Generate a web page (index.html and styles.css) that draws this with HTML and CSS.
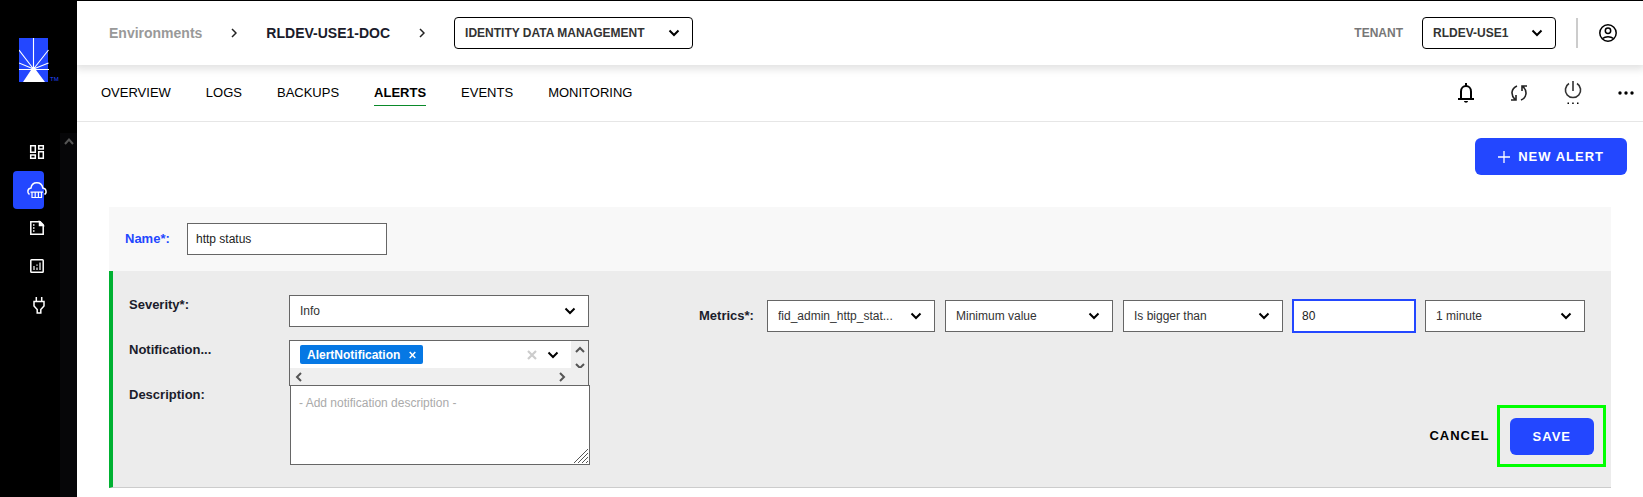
FILE: index.html
```html
<!DOCTYPE html>
<html lang="en">
<head>
<meta charset="utf-8">
<title>Alerts</title>
<link rel="stylesheet" href="styles.css">
</head>
<body>
<svg class="defs" aria-hidden="true"><symbol id="chev" viewBox="0 0 12 8"><path d="M1.5 1.5 6 6l4.500-4.500" fill="none" stroke="currentColor" stroke-width="2"/></symbol></svg>
<div class="app">
  <aside class="sidebar">
    <a class="logo" href="#" aria-label="Home">
      <svg width="30" height="44" viewBox="0 0 30 44"><path fill="#2347ff" d="M0 0h29v44H0z"/><path d="M14.500 31V0M14.500 31 0 12M14.500 31 29.500 12M14.500 31 0 25M14.500 31l15-6M0 31.500h30" stroke="#fff" stroke-width="1.100" fill="none"/><path fill="#fff" d="m13 29h3l1 3 9 12H4l8-12z"/></svg>
      <span class="tm">TM</span>
    </a>
    <div class="side-body">
      <nav class="side-nav" aria-label="Main">
        <a href="#" aria-label="Dashboard"><svg width="14" height="14" viewBox="0 0 14 14"><path d="M.7.7h4.600v6.600H.7zM.7 10h4.600v3.300H.7zM8.700.7h4.600v3.300H8.700zM8.700 6.700h4.600v6.600H8.700z"/></svg></a>
        <a href="#" class="current" aria-label="Environments"><svg width="20" height="17" viewBox="0 0 20 17"><path d="M2.500 12.500C0 11 .2 6.500 4 6 4.500 2.500 7 .8 9.800.8s5.400 1.800 6 5.200c3.600.5 4.300 4.900 1.700 6.500"/><path d="M3.500 10.200h12.500M5 10v5.500h9.500V10M8.200 10v5M11.400 10v5" stroke-width="1.200"/></svg></a>
        <a href="#" aria-label="Reports"><svg width="14" height="14" viewBox="0 0 14 14"><path d="M.8.8h9.400l3 3v9.400H.8z"/><path d="M9.500.8v3.700h3.700z" fill="#fff"/><path d="M3 4h1.500M3 7h1.500M3 10h1.500"/></svg></a>
        <a href="#" aria-label="Metrics"><svg width="14" height="14" viewBox="0 0 14 14"><rect x=".8" y=".8" width="12.400" height="12.400" rx=".8"/><path d="M4 7v4M7 8.500V11M7 5.500v1.200M10 3.500V11" stroke-width="1.200"/></svg></a>
        <a href="#" class="plug" aria-label="Integrations"><svg width="12" height="17" viewBox="0 0 12 17"><path d="M3.300 0v4M8.700 0v4M1 4.500h10V9L7.800 12.500V16H4.200v-3.500L1 9z"/></svg></a>
      </nav>
      <div class="side-scroll"><svg width="10" height="7" viewBox="0 0 10 7"><path d="m1 6 4-4.500L9 6" fill="none" stroke="#555" stroke-width="2"/></svg></div>
    </div>
  </aside>
  <div class="page">
    <header class="topbar">
      <nav class="crumbs" aria-label="Breadcrumb">
        <a class="muted" href="#">Environments</a>
        <svg width="6" height="10" viewBox="0 0 6 10"><path d="m1 1 4 4-4 4" fill="none" stroke="#222" stroke-width="1.500"/></svg>
        <a href="#">RLDEV-USE1-DOC</a>
        <svg width="6" height="10" viewBox="0 0 6 10"><path d="m1 1 4 4-4 4" fill="none" stroke="#222" stroke-width="1.500"/></svg>
      </nav>
      <div class="pick app-pick"><select aria-label="Application"><option>IDENTITY DATA MANAGEMENT</option></select><svg class="chev"><use href="#chev"/></svg></div>
      <div class="tenant">
        <label for="tenant">TENANT</label>
        <div class="pick tenant-pick"><select id="tenant"><option>RLDEV-USE1</option></select><svg class="chev"><use href="#chev"/></svg></div>
      </div>
      <button class="icon user" aria-label="Account"><svg width="18" height="18" viewBox="0 0 18 18" fill="none" stroke="#000" stroke-width="1.500"><circle cx="9" cy="9" r="8.200"/><circle cx="9" cy="6.800" r="2.700"/><path d="M3.500 14.500c3-2.400 8-2.400 11 0"/></svg></button>
    </header>
    <div class="tabbar">
      <nav class="tabs" aria-label="Sections">
        <a href="#">OVERVIEW</a><a href="#">LOGS</a><a href="#">BACKUPS</a><a href="#" class="on">ALERTS</a><a href="#">EVENTS</a><a href="#">MONITORING</a>
      </nav>
      <div class="tools">
        <button class="icon" aria-label="Notifications"><svg width="16" height="20" viewBox="0 0 16 20"><path d="M3 16V8.500C3 1.200 13 1.200 13 8.500V16M0 16h16" fill="none" stroke="#000" stroke-width="2"/><path d="M7 0h2v3H7zM6 18h4c0 2.200-4 2.200-4 0z"/></svg></button>
        <button class="icon" aria-label="Sync"><svg width="18" height="18" viewBox="0 0 18 18" fill="none" stroke="#222" stroke-width="1.600"><path d="M7 2C1 4.500.5 11 5 15.500M1 16h5v-5M11 16c6-2.500 6.500-9 2-13.500M17 2h-5v5"/></svg></button>
        <button class="icon" aria-label="Power"><svg width="18" height="24" viewBox="0 0 18 24"><path d="M9 0v10M5 2.500a7.600 7.600 0 1 0 8 0" fill="none" stroke="#333" stroke-width="1.600"/><path d="M3.500 21.500h1.500v1.500H3.500zM8.200 21.500h1.500v1.500H8.200zM13 21.500h1.500v1.500H13z"/></svg></button>
        <button class="icon" aria-label="More"><svg width="16" height="4" viewBox="0 0 16 4"><circle cx="2" cy="2" r="1.700"/><circle cx="8" cy="2" r="1.700"/><circle cx="14" cy="2" r="1.700"/></svg></button>
      </div>
    </div>
    <main class="content">
      <button class="primary new"><svg width="12" height="12" viewBox="0 0 12 12"><path d="M6 0v12M0 6h12" stroke="#fff" stroke-width="1.300"/></svg>NEW ALERT</button>
      <form class="alert">
        <div class="name-row"><label for="name">Name*:</label><input id="name" class="field" type="text" value="http status"></div>
        <div class="details">
          <div class="left">
            <label for="severity">Severity*:</label>
            <div class="pick"><select id="severity"><option>Info</option></select><svg class="chev"><use href="#chev"/></svg></div>
            <span class="lab">Notification...</span>
            <div class="multi">
              <div class="multi-main">
                <span class="tag">AlertNotification<button type="button" aria-label="Remove AlertNotification"><svg width="7" height="8" viewBox="0 0 7 8"><path d="m.7 1 5.600 6M6.300 1 .7 7" stroke="#fff" stroke-width="1.500"/></svg></button></span>
                <button type="button" class="icon clear" aria-label="Clear"><svg width="10" height="10" viewBox="0 0 10 10"><path d="m1 1 8 8M9 1 1 9" stroke="#ccc" stroke-width="2.200"/></svg></button>
                <button type="button" class="icon" aria-label="Open list"><svg width="12" height="8"><use href="#chev"/></svg></button>
              </div>
              <div class="vbar"><svg width="10" height="7" viewBox="0 0 10 7"><path d="m1 6 4-4 4 4"/></svg><svg width="10" height="5" viewBox="0 0 10 5"><path d="m1 1 4 4 4-4"/></svg></div>
              <div class="hbar"><svg width="7" height="10" viewBox="0 0 7 10"><path d="M6 1 2 5l4 4"/></svg><svg width="7" height="10" viewBox="0 0 7 10"><path d="m1 1 4 4-4 4"/></svg></div>
            </div>
            <label for="desc">Description:</label>
            <div class="area"><textarea id="desc" class="field" placeholder="- Add notification description -"></textarea><svg class="grip" width="14" height="14" viewBox="0 0 14 14"><path d="M0 14 14 0M4 14 14 4M8 14l6-6M12 14l2-2" stroke="#555"/></svg></div>
          </div>
          <div class="right">
            <div class="metrics">
              <label for="metric">Metrics*:</label>
              <div class="pick wide"><select id="metric"><option>fid_admin_http_stat...</option></select><svg class="chev"><use href="#chev"/></svg></div>
              <div class="pick wide"><select aria-label="Aggregate"><option>Minimum value</option></select><svg class="chev"><use href="#chev"/></svg></div>
              <div class="pick mid"><select aria-label="Comparison"><option>Is bigger than</option></select><svg class="chev"><use href="#chev"/></svg></div>
              <input class="field threshold" type="text" aria-label="Threshold" value="80">
              <div class="pick mid"><select aria-label="Period"><option>1 minute</option></select><svg class="chev"><use href="#chev"/></svg></div>
            </div>
            <div class="actions">
              <button type="button" class="cancel">CANCEL</button>
              <div class="highlight"><button type="button" class="primary">SAVE</button></div>
            </div>
          </div>
        </div>
      </form>
    </main>
  </div>
</div>
</body>
</html>
```
FILE: styles.css
```css
* { box-sizing: border-box; }
body { margin: 0; background: #fff; color: #000; font: 12px/16px "Liberation Sans", Arial, sans-serif; }
a { color: inherit; text-decoration: none; }
button, input, select, textarea { font: inherit; color: inherit; }
svg { display: block; flex: none; }
.defs { position: absolute; width: 0; height: 0; }
.app { display: flex; min-height: 100vh; border-top: 1px solid #000; }

.sidebar { flex: none; width: 77px; background: #000; }
.logo { display: flex; align-items: flex-start; height: 132px; padding: 37px 0 0 19px; }
.tm { color: #2347ff; font-size: 6px; line-height: 8px; margin: 37px 0 0 1px; }
.side-body { display: flex; justify-content: space-between; height: calc(100vh - 133px); }
.side-nav { display: flex; flex-direction: column; padding-left: 13px; }
.side-nav a { display: flex; align-items: center; justify-content: flex-end; width: 31px; height: 38px; }
.side-nav svg { fill: none; stroke: #fff; stroke-width: 1.500; overflow: visible; }
.side-nav a.current { justify-content: flex-start; padding-left: 14px; background: #2347ff; border-radius: 4px; }
.side-nav .plug { padding-top: 3px; justify-content: flex-start; padding-left: 20px; }
.side-scroll { width: 17px; background: #060608; padding: 5px 4px; }

.page { flex: 1; min-width: 0; }
.topbar { position: relative; display: flex; align-items: center; height: 64px; padding: 0 26px 0 32px; box-shadow: 0 2px 8px 2px rgba(0, 0, 0, .12); clip-path: inset(0 0 -14px 0); background: #fff; }
.crumbs { display: flex; align-items: center; gap: 29px; font-size: 14px; font-weight: 700; color: #1b1c2b; }
.crumbs .muted { color: #999; }
.pick { position: relative; height: 32px; }
.pick select { appearance: none; width: 100%; height: 100%; padding: 0 28px 0 10px; border: 1px solid #666; border-radius: 0; background: #fff; color: #333; }
.chev { position: absolute; right: 13px; top: 12px; width: 12px; height: 8px; pointer-events: none; }
.app-pick { width: 239px; margin-left: 29px; }
.topbar .pick select { border-color: #000; border-radius: 4px; font-weight: 700; font-size: 12px; }
.tenant { display: flex; align-items: center; gap: 19px; margin-left: auto; font-weight: 700; color: #777; }
.tenant .chev { color: #000; }
.tenant-pick { width: 134px; }
.icon { display: flex; padding: 0; border: 0; background: none; }
.user { margin-left: 20px; padding: 6px 0 6px 21px; border-left: 2px solid #ccc; }

.tabbar { display: flex; justify-content: space-between; align-items: center; height: 57px; padding: 0 9px 0 24px; border-bottom: 1px solid #e6e6e6; }
.tabs { display: flex; gap: 35px; font-size: 13px; line-height: 20px; }
.tabs a { padding: 2px 0; border-bottom: 1px solid transparent; }
.tabs .on { font-weight: 700; border-color: #0a8a2a; }
.tools { display: flex; align-items: center; gap: 36px; }

.content { padding: 16px 32px 9px; }
.primary { display: flex; align-items: center; justify-content: center; height: 37px; padding: 0 23px; border: 0; border-radius: 6px; background: #2347ff; color: #fff; font-size: 13px; font-weight: 700; letter-spacing: 1px; }
.new { gap: 8px; margin: 0 -16px 32px auto; }
.name-row { display: flex; align-items: center; height: 64px; padding-left: 16px; background: #f8f8f8; }
.name-row label { width: 62px; color: #2347ff; font-size: 13px; font-weight: 700; }
.field { height: 32px; border: 1px solid #666; border-radius: 0; background: #fff; padding: 0 8px; outline: 0; color: #222; }
.name-row .field { width: 200px; }
.details { display: flex; justify-content: space-between; padding: 24px 0 20px 16px; border-left: 4px solid #00b132; border-bottom: 1px solid #ccc; background: #ececec; }
.left { display: grid; grid-template-columns: 160px 300px; grid-template-rows: 45px 45px 82px; }
.left label, .lab, .metrics label { font-size: 13px; font-weight: 700; color: #1b1c2b; }
.left label, .lab { padding-top: 2px; }
.multi { display: grid; grid-template-columns: 1fr 17px; grid-template-rows: 27px 17px; height: 46px; border: 1px solid #666; background: #fff; }
.multi-main { display: flex; align-items: center; padding: 0 12px 0 10px; }
.tag { display: flex; align-items: center; gap: 9px; height: 19px; padding: 0 7px; border-radius: 2px; background: #0678e4; color: #fff; font-weight: 700; }
.tag button { padding: 0; border: 0; background: none; }
.clear { margin: 0 10px 0 auto; }
.vbar, .hbar { display: flex; justify-content: space-between; background: #efefef; }
.vbar { flex-direction: column; align-items: center; padding-top: 5px; }
.hbar { grid-column: 1 / 3; align-items: center; padding: 0 22px 0 5px; }
.multi path { fill: none; }
.vbar path, .hbar path { stroke: #555; stroke-width: 2; }
.area { position: relative; margin-left: 1px; width: 300px; }
.area textarea { display: block; width: 100%; height: 80px; padding: 9px 8px; resize: none; }
.area textarea::placeholder { color: #aaa; }
.grip { position: absolute; right: 2px; bottom: 4px; }
.right { flex: 1; min-width: 0; display: flex; flex-direction: column; justify-content: space-between; margin-left: 110px; }
.metrics { display: flex; align-items: center; gap: 10px; padding: 4px 26px 0 0; }
.metrics label { flex: none; width: 58px; white-space: nowrap; }
.wide { flex: 1 1 168px; }
.mid { flex: 1 1 160px; }
.metrics .threshold { flex: 1 1 124px; min-width: 0; height: 34px; border: 2px solid #2347ff; margin: 0 -1px; }
.actions { display: flex; justify-content: flex-end; align-items: center; gap: 7px; padding-right: 5px; }
.cancel { padding: 0; border: 0; background: none; font-size: 13px; font-weight: 700; letter-spacing: 1px; }
.highlight { padding: 10px 9px 9px 10px; border: 3px solid #0f0; }
```
